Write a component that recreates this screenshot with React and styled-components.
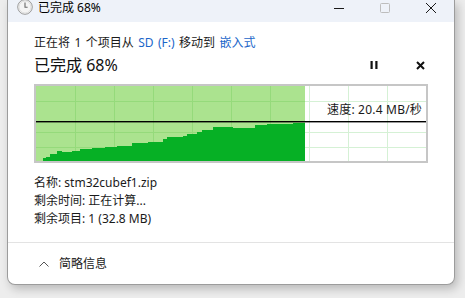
import React from "react";
import styled, { createGlobalStyle } from "styled-components";

const GlobalStyle = createGlobalStyle`
  html, body {
    margin: 0;
    padding: 0;
    background: #ededed;
  }
  body {
    font-family: "Noto Sans", "Noto Sans CJK SC", sans-serif;
    color: #1a1a1a;
  }
`;

const FONT = `"Noto Sans", "Noto Sans CJK SC", sans-serif`;

// chart is 390 x 75, progress area ends at 269
const CHART_W = 390;
const CHART_H = 75;
const DONE_W = 269;
const SPEED_Y = 35;

const samples = [
  [7, 72], [10, 71], [14, 68], [21, 65], [26, 66], [36, 65], [44, 63],
  [56, 62], [69, 61], [81, 60], [96, 57], [112, 56], [127, 53], [131, 51],
  [147, 50], [151, 48], [161, 46], [166, 44], [177, 41], [194, 41],
  [197, 42], [219, 39], [231, 38], [257, 37],
];

const stepPath = () => {
  let d = `M${samples[0][0]} ${CHART_H}`;
  samples.forEach(([x, y], i) => {
    const next = i + 1 < samples.length ? samples[i + 1][0] : DONE_W;
    d += ` V${y} H${next}`;
  });
  return d + ` V${CHART_H} Z`;
};

const Page = styled.div`
  width: 465px;
  height: 298px;
  box-sizing: border-box;
  padding: 0 10px 13px 7px;
  display: flex;
  overflow: hidden;
`;

const Window = styled.div`
  width: 448px;
  height: 285px;
  box-sizing: border-box;
  background: #fff;
  border: 1px solid #9c9c9c;
  border-top: none;
  border-radius: 0 0 8px 8px;
  box-shadow: 3px 4px 10px rgba(0, 0, 0, 0.22);
  display: flex;
  flex-direction: column;
  overflow: hidden;
`;

const TitleBar = styled.div`
  height: 22px;
  flex: none;
  background: #eef2f9;
  display: flex;
  align-items: flex-start;
`;

const AppIcon = styled.svg`
  width: 16px;
  height: 16px;
  margin: -1px 5px 0 9px;
  flex: none;
`;

const TitleText = styled.div`
  font: 12px/16px ${FONT};
  color: #000;
  flex: 1;
`;

const CaptionButton = styled.div`
  width: 46px;
  height: 15px;
  display: flex;
  align-items: center;
  justify-content: center;
`;

const Body = styled.div`
  padding: 13px 26px 0 26px;
  display: flex;
  flex-direction: column;
`;

const Line = styled.div`
  font: 12px/16px ${FONT};
  color: #1a1a1a;
  white-space: nowrap;
  word-spacing: ${(p) => p.$wordSpacing || 0}px;
`;

const Link = styled.span`
  color: #1a66c9;
`;

const StatusRow = styled.div`
  margin-top: 3px;
  height: 22px;
  display: flex;
  align-items: center;
`;

const Percent = styled.div`
  flex: 1;
  font: 16px/22px ${FONT};
  color: #111;
`;

const RowButton = styled.div`
  width: 16px;
  height: 16px;
  display: flex;
  align-items: center;
  justify-content: center;
  margin-left: ${(p) => p.$gap || 0}px;
`;

const Graph = styled.div`
  margin-top: 8px;
  position: relative;
  width: 394px;
  height: 79px;
  box-sizing: border-box;
  border: 2px solid #c6c6c6;
`;

const SpeedLabel = styled.div`
  position: absolute;
  right: 4px;
  top: 16px;
  font: 12px/16px ${FONT};
  letter-spacing: 0.2px;
  color: #1a1a1a;
`;

const Details = styled.div`
  margin-top: 11px;
  margin-bottom: 14px;
  display: flex;
  flex-direction: column;
`;

const DetailLine = styled(Line)`
  line-height: 18px;
`;

const Footer = styled.div`
  flex: 1;
  border-top: 1px solid #e3e3e3;
  display: flex;
  align-items: center;
  padding-left: 31px;
  gap: 10px;
`;

const FooterText = styled.div`
  font: 12px/16px ${FONT};
  color: #1a1a1a;
`;

const Chart = () => {
  const cols = [];
  for (let x = 39; x < CHART_W; x += 39) cols.push(x);
  const rows = [15, 46, 61];
  return (
    <svg width={CHART_W} height={CHART_H} style={{ display: "block" }}>
      <rect x="0" y="0" width={CHART_W} height={CHART_H} fill="#fff" />
      <rect x="0" y="0" width={DONE_W} height={CHART_H} fill="#abe38f" />
      {cols.map((x) => (
        <line
          key={"c" + x}
          x1={x + 0.5}
          x2={x + 0.5}
          y1="0"
          y2={CHART_H}
          stroke={x < DONE_W ? "#95da7b" : "#d5f1d5"}
          strokeWidth="1"
        />
      ))}
      {rows.map((y) => (
        <g key={"r" + y}>
          <line x1="0" x2={DONE_W} y1={y + 0.5} y2={y + 0.5} stroke="#95da7b" />
          <line x1={DONE_W} x2={CHART_W} y1={y + 0.5} y2={y + 0.5} stroke="#d5f1d5" />
        </g>
      ))}
      <path d={stepPath()} fill="#06b025" />
      <rect x="0" y={SPEED_Y} width={CHART_W} height="1.4" fill="#000" />
    </svg>
  );
};

const App = () => (
  <>
    <GlobalStyle />
    <Page>
      <Window>
        <TitleBar>
          <AppIcon viewBox="0 0 16 16">
            <circle cx="8" cy="8" r="7.3" fill="#f4f4f4" stroke="#9a9a9a" strokeWidth="1" />
            <circle cx="8" cy="8" r="6" fill="none" stroke="#d8d8d8" strokeWidth="0.8" />
            <path d="M8 3.6V8.3H10.6" fill="none" stroke="#6a6a6a" strokeWidth="1.1" />
          </AppIcon>
          <TitleText>已完成 68%</TitleText>
          <CaptionButton>
            <svg width="10" height="10" viewBox="0 0 10 10">
              <rect x="0" y="5" width="10" height="1" fill="#1a1a1a" />
            </svg>
          </CaptionButton>
          <CaptionButton>
            <svg width="10" height="10" viewBox="0 0 10 10">
              <rect x="0.5" y="0.5" width="9" height="9" rx="1" fill="none" stroke="#bdbdbd" />
            </svg>
          </CaptionButton>
          <CaptionButton>
            <svg width="10" height="10" viewBox="0 0 10 10">
              <path d="M0 0L10 10M10 0L0 10" stroke="#1a1a1a" strokeWidth="1" />
            </svg>
          </CaptionButton>
        </TitleBar>

        <Body>
          <Line $wordSpacing={1.3}>
            正在将 1 个项目从 <Link>SD (F:)</Link> 移动到 <Link>嵌入式</Link>
          </Line>
          <StatusRow>
            <Percent>已完成 68%</Percent>
            <RowButton>
              <svg width="8" height="8" viewBox="0 0 8 8">
                <rect x="0.5" y="0" width="2.2" height="8" fill="#111" />
                <rect x="5.3" y="0" width="2.2" height="8" fill="#111" />
              </svg>
            </RowButton>
            <RowButton $gap={30}>
              <svg width="9" height="9" viewBox="0 0 9 9">
                <path d="M1 1L8 8M8 1L1 8" stroke="#111" strokeWidth="2" />
              </svg>
            </RowButton>
          </StatusRow>
          <Graph>
            <Chart />
            <SpeedLabel>速度: 20.4 MB/秒</SpeedLabel>
          </Graph>
          <Details>
            <DetailLine>名称: stm32cubef1.zip</DetailLine>
            <DetailLine>剩余时间: 正在计算...</DetailLine>
            <DetailLine>剩余项目: 1 (32.8 MB)</DetailLine>
          </Details>
        </Body>

        <Footer>
          <svg width="10" height="6" viewBox="0 0 10 6">
            <path d="M0.5 5.5L5 1L9.5 5.5" fill="none" stroke="#555" strokeWidth="1" />
          </svg>
          <FooterText>简略信息</FooterText>
        </Footer>
      </Window>
    </Page>
  </>
);

export default App;
